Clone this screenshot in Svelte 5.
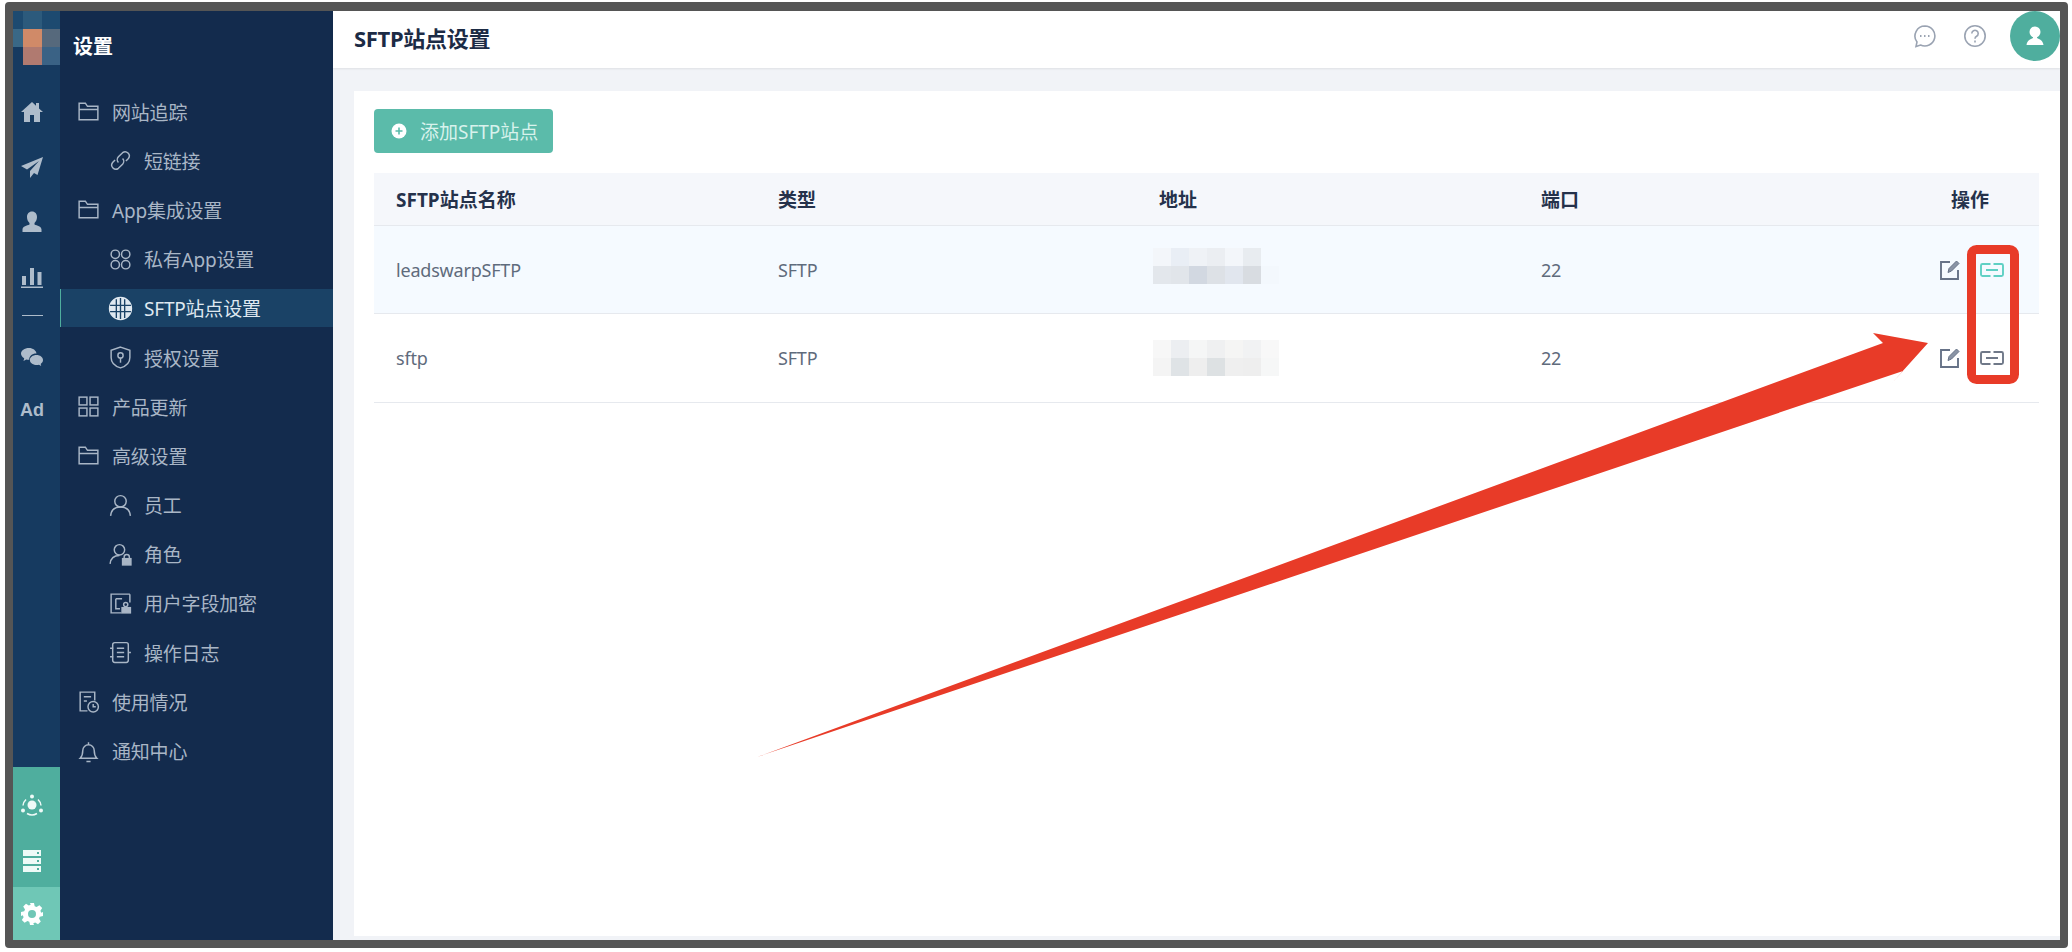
<script>
  const paths = {
    folder: '<path d="M3 20V4h6l2 3h10v13z M3 10h18"/>',
    link: '<path d="M10 14a4 4 0 0 1 0-5.500l4-4a4 4 0 0 1 5.600 5.600l-2.400 2.400 M14 10a4 4 0 0 1 0 5.500l-4 4a4 4 0 0 1-5.600-5.600l2.400-2.400"/>',
    apps: '<circle cx="7" cy="7" r="4"/><circle cx="17" cy="7" r="4"/><circle cx="7" cy="17" r="4"/><circle cx="17" cy="17" r="4"/>',
    globe: '<circle cx="12" cy="12" r="10.500" fill="currentColor"/><path stroke="#1a4266" stroke-width="1.300" d="M2 9h20 M2 15h20 M8 3v18 M12 2v20 M16 3v18"/>',
    shield: '<path d="M12 2l9 3v7c0 5-4 8.500-9 10-5-1.500-9-5-9-10V5z"/><circle cx="12" cy="10" r="2.500"/><path d="M12 12.500V17"/>',
    grid: '<rect x="3" y="3" width="7.500" height="7.500"/><rect x="13.500" y="3" width="7.500" height="7.500"/><rect x="3" y="13.500" width="7.500" height="7.500"/><rect x="13.500" y="13.500" width="7.500" height="7.500"/>',
    user: '<circle cx="12" cy="8" r="5.500"/><path d="M2.500 22c.5-5.500 4-8.500 9.500-8.500s9 3 9.500 8.500"/>',
    role: '<circle cx="11" cy="7.500" r="5"/><path d="M2 21c.5-5 3.500-8 9-8"/><rect x="14" y="16" width="8" height="6" fill="currentColor"/><path d="M15.500 16v-1.500a2.500 2.500 0 0 1 5 0V16"/>',
    field: '<path d="M21 3H3v18h10 M21 3v8 M7.500 7.500h6 M7.500 7.500V17h4"/><circle cx="17" cy="13" r="2"/><rect x="13.500" y="16" width="8" height="5" fill="currentColor"/>',
    log: '<rect x="4.500" y="2.500" width="15" height="19" rx="2"/><path d="M8.500 8h7 M8.500 12h7 M8.500 16h7 M2 8h3 M2 16h3 M19.500 12h2.500"/>',
    usage: '<path d="M11 21H4V3h14v8 M7.500 7.500h7 M7.500 11.500h3"/><circle cx="16.500" cy="17" r="5"/><path d="M16.500 14.500V17h2.500"/>',
    bell: '<path d="M4 18.500h16c-2-2-2.500-3.500-2.500-7.500a5.500 5.500 0 0 0-11 0c0 4-.5 5.500-2.500 7.500z M12 3v2.500 M10 21.500h4"/>'
  };

  const menu = [
    { icon: 'folder', label: '网站追踪' },
    { icon: 'link', label: '短链接', sub: true },
    { icon: 'folder', label: 'App集成设置' },
    { icon: 'apps', label: '私有App设置', sub: true },
    { icon: 'globe', label: 'SFTP站点设置', sub: true, active: true },
    { icon: 'shield', label: '授权设置', sub: true },
    { icon: 'grid', label: '产品更新' },
    { icon: 'folder', label: '高级设置' },
    { icon: 'user', label: '员工', sub: true },
    { icon: 'role', label: '角色', sub: true },
    { icon: 'field', label: '用户字段加密', sub: true },
    { icon: 'log', label: '操作日志', sub: true },
    { icon: 'usage', label: '使用情况' },
    { icon: 'bell', label: '通知中心' }
  ];

  const rows = [
    {
      name: 'leadswarpSFTP', port: 22, active: true,
      blur: ['#f3f6fa','#e9eef5','#eff2f6','#ebeef2','#f3f6fa','#e8ecf0','#f5faff',
             '#e3e7ec','#e1e5ea','#d2d8e1','#dde1e6','#e1e6ee','#d8dce1','#f3f8fd']
    },
    {
      name: 'sftp', port: 22, active: false,
      blur: ['#f7f7f7','#eceef1','#f5f6f6','#eff0f1','#f5f5f4','#f1f2f3','#f8f8f8',
             '#f4f4f4','#dfe3e6','#eeeeee','#dde1e3','#efefef','#eeeeee','#f6f7f7']
    }
  ];
</script>

<div class="frame">
  <aside class="rail">
    <div class="logo">
      <i class="px a"></i><i class="px g"></i><i class="px b"></i><i class="px c"></i>
      <i class="px d"></i><i class="px e"></i><i class="px f"></i>
    </div>
    <div class="rail-icons">
      <svg width="24" height="24" viewBox="0 0 24 24"><path fill="currentColor" d="M12 2L1 12h3v10h6v-7h4v7h6V12h3l-4-3.600V3h-3v2.700z"/></svg>
      <svg width="24" height="24" viewBox="0 0 24 24"><path fill="currentColor" d="M23 2L1 11l6 3.500L19 6l-9 10v7l4-5 3.500 2z"/></svg>
      <svg width="24" height="24" viewBox="0 0 24 24"><path fill="currentColor" d="M12 1.500c3.200 0 5 2.400 5 5.500 0 2.600-1 4.500-2.500 6v1.500c2.500 1 7 2 7 5V22h-19v-2.500c0-3 4.500-4 7-5V13C8 11.500 7 9.600 7 7c0-3.100 1.800-5.500 5-5.500z"/></svg>
      <svg width="24" height="24" viewBox="0 0 24 24"><path fill="currentColor" d="M2 11h4v9H2z M10 3h4v17h-4z M17.500 7h4v13h-4z M1 21.500h22V23H1z"/></svg>
      <span class="rail-line"></span>
      <svg class="wechat" width="24" height="24" viewBox="0 0 24 24"><path fill="currentColor" d="M9 3c4 0 7 2.400 7.500 5.500C12.500 8.300 9 11 9.300 14.700c-1 .1-2 0-3-.3L3.500 16l.7-2.700C2 12 1 10.200 1 8.500 1 5.500 4.500 3 9 3z"/><path fill="currentColor" d="M16.500 10c3.600 0 6.500 2.200 6.500 5 0 1.600-.9 2.900-2.300 3.900l.5 2.100-2.300-1.200c-3.400.9-9-.6-9-4.800 0-2.800 2.900-5 6.600-5z"/></svg>
      <span class="ad">Ad</span>
    </div>
    <div class="rail-teal">
      <svg width="24" height="24" viewBox="0 0 24 24"><circle cx="12" cy="12" r="4.500" fill="currentColor"/><circle cx="12" cy="3.500" r="2" fill="currentColor"/><circle cx="3" cy="17.500" r="2" fill="currentColor"/><circle cx="21" cy="17.500" r="2" fill="currentColor"/><path fill="none" stroke="currentColor" stroke-width="1.500" d="M6 6.500a9.500 9.500 0 0 0-3 6 M18 6.500a9.500 9.500 0 0 1 3 6 M7 20.500a10 10 0 0 0 10 0"/></svg>
      <svg width="24" height="26" viewBox="0 0 24 26"><path fill="currentColor" d="M3 2h18v6H3z M3 10h18v6H3z M3 18h18v6H3z"/><path fill="#4fae9e" d="M17 4h2v2h-2z M17 12h2v2h-2z M17 20h2v2h-2z"/></svg>
    </div>
    <div class="rail-set">
      <svg width="24" height="24" viewBox="0 0 24 24"><path fill="currentColor" fill-rule="evenodd" d="M10 1h4l.7 3.200 1.900.8 2.800-1.800 2.800 2.800-1.800 2.800.8 1.900L23 10v4l-3.200.7-.8 1.900 1.800 2.800-2.800 2.800-2.800-1.800-1.900.8L14 23h-4l-.7-3.200-1.900-.8-2.800 1.800-2.800-2.800 1.800-2.800-.8-1.900L1 14v-4l3.200-.7.8-1.900-1.800-2.800 2.800-2.800 2.800 1.800 1.900-.8z M12 8a4 4 0 1 0 0 8 4 4 0 0 0 0-8z"/></svg>
    </div>
  </aside>

  <nav class="sidebar">
    <div class="side-title">设置</div>
    {#each menu as item}
      <div class="menu-row">
        <div class="menu-item" class:sub={item.sub} class:active={item.active}>
          <svg class="menu-icon" viewBox="0 0 24 24" fill="none" stroke="currentColor" stroke-width="1.400">{@html paths[item.icon]}</svg>
          <span>{item.label}</span>
        </div>
      </div>
    {/each}
  </nav>

  <main class="main">
    <header class="topbar">
      <h1>SFTP站点设置</h1>
      <div class="top-actions">
        <svg width="24" height="24" viewBox="0 0 24 24" fill="none" stroke="#9aa3b2" stroke-width="1.600"><path d="M12 2a10 10 0 1 1-4.500 19L3 22.500l1-4.500A10 10 0 0 1 12 2z"/><path stroke-width="2" stroke-dasharray="1.500 2.500" d="M7 12h10"/></svg>
        <svg width="24" height="24" viewBox="0 0 24 24" fill="none" stroke="#9aa3b2" stroke-width="1.600"><circle cx="12" cy="12" r="10.200"/><path d="M8.800 9.500a3.200 3.200 0 1 1 4.800 2.800c-1 .6-1.600 1.200-1.600 2.400 M12 16.500v2"/></svg>
        <div class="avatar">
          <svg width="24" height="24" viewBox="0 0 24 24"><circle cx="12" cy="8" r="5.500" fill="#fff"/><path fill="#fff" d="M10 12h4v2c2.500 1 6 2.500 6.500 7h-17c.5-4.500 4-6 6.500-7z"/></svg>
        </div>
      </div>
    </header>

    <div class="content">
      <section class="panel">
        <button class="add-btn">
          <svg width="16" height="16" viewBox="0 0 16 16"><circle cx="8" cy="8" r="7.500" fill="#fff"/><path stroke="#5bbbaa" stroke-width="1.600" d="M4.500 8h7 M8 4.500v7"/></svg>
          <span>添加SFTP站点</span>
        </button>

        <div class="table">
          <div class="tr head">
            <div>SFTP站点名称</div>
            <div>类型</div>
            <div>地址</div>
            <div>端口</div>
            <div class="ops-cell">操作</div>
          </div>
          {#each rows as row}
            <div class="tr body" class:hl={row.active}>
              <div>{row.name}</div>
              <div>SFTP</div>
              <div class="addr">
                {#each row.blur as c}
                  <i style="background: {c}"></i>
                {/each}
              </div>
              <div>{row.port}</div>
              <div class="ops-cell ops">
                <svg width="22" height="22" viewBox="0 0 22 22" fill="none" stroke="#667287" stroke-width="1.900"><path d="M11 3H2v17h17v-9"/><path fill="#8a94a5" stroke-width="1" d="M9 13.500l1-4L17.500 2l2.500 2.500-7.500 7.500z"/></svg>
                <svg class="rel" class:on={row.active} width="24" height="14" viewBox="0 0 24 14" fill="none" stroke="currentColor" stroke-width="1.900"><path d="M10.500 1H2.500a1.500 1.500 0 0 0-1.500 1.500v9A1.500 1.500 0 0 0 2.500 13h8 M13.500 1h8A1.500 1.500 0 0 1 23 2.500v9a1.500 1.500 0 0 1-1.500 1.500h-8 M6 7h12"/></svg>
              </div>
            </div>
          {/each}
        </div>
      </section>
    </div>
  </main>
</div>

<svg class="marks" width="2072" height="952" viewBox="0 0 2072 952">
  <polygon fill="#e83b28" points="757,757 1883,343 1873,333 1928,343 1892,383 1903,371" />
  <rect x="1971.500" y="249.500" width="43" height="130" rx="5" fill="none" stroke="#e83b28" stroke-width="9" />
</svg>

<style>
  :global(body) {
    margin: 0;
    background: #fff;
  }

  .frame {
    display: flex;
    height: 946px;
    margin: 2px 4px 0 5px;
    border: 8px solid #555;
    border-top-width: 9px;
    border-radius: 4px;
    box-sizing: border-box;
    overflow: hidden;
    font-family: "Noto Sans", "Noto Sans CJK SC", sans-serif;
  }

  /* icon rail */
  .rail {
    width: 47px;
    flex-shrink: 0;
    background: #163a60;
    color: #aebccb;
    display: flex;
    flex-direction: column;
  }

  .logo {
    height: 54px;
    display: grid;
    grid-template-columns: 10px 19px 18px;
    grid-template-rows: 18px 18px 18px;
    flex-shrink: 0;
  }
  .px { display: block; }
  .a { grid-area: 1 / 1 / 2 / 4; background: #1d4a70; }
  .g { grid-area: 1 / 2 / 2 / 3; background: #2c5a7c; }
  .b { grid-area: 2 / 1 / 3 / 2; background: #3a6886; }
  .c { grid-area: 2 / 2 / 3 / 3; background: #d08a68; }
  .d { grid-area: 3 / 2 / 4 / 3; background: #b07a70; }
  .e { grid-area: 2 / 3 / 3 / 4; background: #56697c; }
  .f { grid-area: 3 / 3 / 4 / 4; background: #3a6285; }

  .rail-icons {
    flex: 1;
    display: flex;
    flex-direction: column;
    align-items: center;
    padding: 35px 9px 0 0;
  }
  .rail-icons svg { margin-bottom: 31px; }
  .rail-icons .wechat { margin-bottom: 29px; }
  .rail-line {
    width: 21px;
    height: 1px;
    background: #aebccb;
    margin: -5px 0 29px;
  }
  .ad {
    font-size: 18px;
    font-weight: 700;
    line-height: 24px;
    font-family: "Liberation Sans", sans-serif;
  }

  .rail-teal {
    height: 120px;
    background: #4fae9e;
    color: #eefaf7;
    display: flex;
    flex-direction: column;
    align-items: center;
    padding: 26px 9px 0 0;
    gap: 31px;
    box-sizing: border-box;
  }
  .rail-set {
    height: 53px;
    background: #6fc7b6;
    color: #fff;
    display: flex;
    align-items: center;
    justify-content: center;
    padding-right: 9px;
  }

  /* menu */
  .sidebar {
    width: 273px;
    flex-shrink: 0;
    background: #132b4d;
    color: #a9b6c6;
  }
  .side-title {
    height: 76px;
    padding: 18px 0 0 13px;
    box-sizing: border-box;
    font-size: 20px;
    font-weight: 700;
    line-height: 36px;
    color: #fff;
  }
  .menu-row {
    height: 49.200px;
    display: flex;
    align-items: center;
  }
  .menu-item {
    flex: 1;
    height: 38px;
    display: flex;
    align-items: center;
    gap: 11px;
    padding-left: 16px;
    font-size: 19px;
    letter-spacing: -0.2px;
  }
  .menu-item.sub { padding-left: 48px; }
  .menu-item.active {
    background: #1a4266;
    color: #dfe8f0;
    box-shadow: inset 1px 0 0 #4fae9e;
  }
  .menu-icon {
    width: 25px;
    height: 25px;
    flex-shrink: 0;
  }

  /* main area */
  .main {
    flex: 1;
    min-width: 0;
    display: flex;
    flex-direction: column;
    background: #f1f3f7;
  }
  .topbar {
    height: 57px;
    flex-shrink: 0;
    background: #fff;
    display: flex;
    align-items: center;
    justify-content: space-between;
    padding-left: 21px;
    box-sizing: border-box;
    box-shadow: 0 1px 2px rgba(0, 0, 0, .08);
  }
  h1 {
    margin: 0 0 6px;
    font-size: 22px;
    font-weight: 700;
    color: #1c2b45;
    letter-spacing: -0.3px;
  }
  .top-actions {
    display: flex;
    align-items: center;
    align-self: flex-start;
    height: 50px;
    gap: 26px;
  }
  .avatar {
    width: 50px;
    height: 50px;
    margin-left: -3px;
    border-radius: 50%;
    background: #4fae9e;
    display: flex;
    align-items: center;
    justify-content: center;
  }
  .content {
    flex: 1;
    display: flex;
    padding: 23px 0 4px 21px;
    min-height: 0;
  }
  .panel {
    flex: 1;
    background: #fff;
    padding: 18px 21px 0 20px;
  }
  .add-btn {
    height: 44px;
    width: 179px;
    display: flex;
    align-items: center;
    gap: 13px;
    padding: 0 0 0 17px;
    border: none;
    border-radius: 4px;
    background: #5bbbaa;
    color: #d8f2ec;
    font: inherit;
    font-size: 19px;
  }
  .table { margin-top: 20px; }
  .tr {
    display: grid;
    grid-template-columns: 382px 381px 382px 1fr 120px;
    align-items: center;
    padding: 0 50px 0 22px;
    border-bottom: 1px solid #e6e9ee;
    font-size: 18px;
  }
  .head {
    height: 53px;
    box-sizing: border-box;
    background: #f5f7fb;
    color: #25324b;
    font-size: 19px;
    font-weight: 700;
  }
  .body {
    height: 89px;
    box-sizing: border-box;
    color: #5f6b7c;
    letter-spacing: -0.2px;
  }
  .body.hl { height: 88px; background: #f5faff; }
  .ops-cell { text-align: right; }
  .ops {
    display: flex;
    justify-content: flex-end;
    align-items: center;
    gap: 19px;
    margin-right: -15px;
  }
  .rel { color: #6f7888; }
  .rel.on { color: #5fd0c4; }
  .addr {
    display: grid;
    grid-template-columns: repeat(7, 18px);
    grid-auto-rows: 18px;
    margin-left: -6px;
  }
  .hl .addr { margin-top: -8px; }
  .addr i { display: block; }

  /* annotation drawn on top of the screenshot */
  .marks {
    position: absolute;
    left: 0;
    top: 0;
    pointer-events: none;
  }
</style>
